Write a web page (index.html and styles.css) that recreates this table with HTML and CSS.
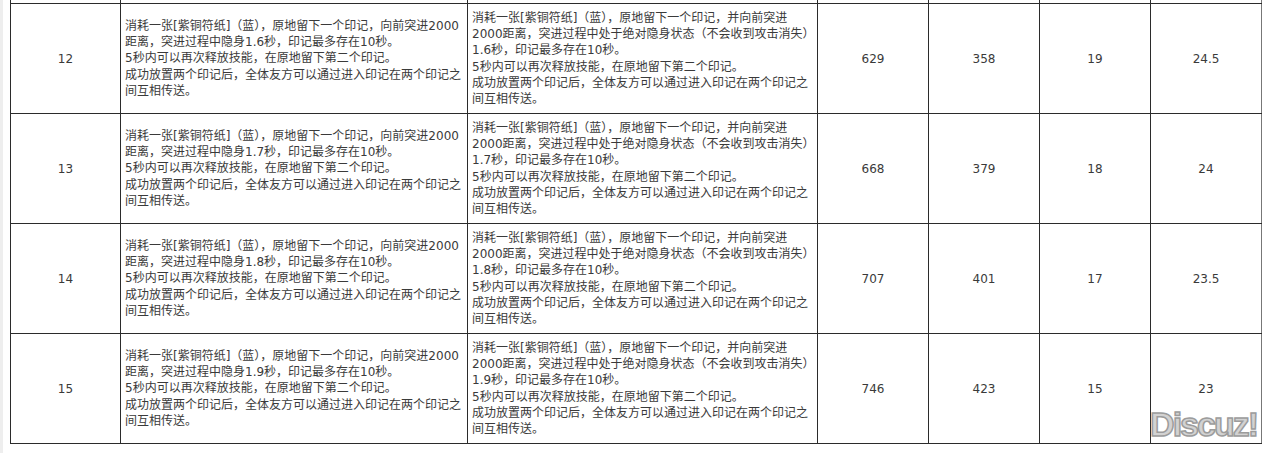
FILE: index.html
```html
<!DOCTYPE html>
<html lang="zh-CN">
<head>
<meta charset="utf-8">
<title>印记技能表</title>
<link rel="stylesheet" href="styles.css">
</head>
<body>
<div class="page">
  <div class="post">
    <table class="grid">
      <colgroup>
        <col class="c-lv"><col class="c-d1"><col class="c-d2"><col class="c-n"><col class="c-n"><col class="c-n"><col class="c-n">
      </colgroup>
      <tbody>
        <tr class="stub"><td></td><td></td><td></td><td></td><td></td><td></td><td class="last"></td></tr>
        <tr class="row">
          <td class="num">12</td>
          <td class="desc">消耗一张[紫铜符纸]（蓝），原地留下一个印记，向前突进2000<br>距离，突进过程中隐身1.6秒，印记最多存在10秒。<br>5秒内可以再次释放技能，在原地留下第二个印记。<br>成功放置两个印记后，全体友方可以通过进入印记在两个印记之<br>间互相传送。</td>
          <td class="desc">消耗一张[紫铜符纸]（蓝），原地留下一个印记，并向前突进<br>2000距离，突进过程中处于绝对隐身状态（不会收到攻击消失）<br>1.6秒，印记最多存在10秒。<br>5秒内可以再次释放技能，在原地留下第二个印记。<br>成功放置两个印记后，全体友方可以通过进入印记在两个印记之<br>间互相传送。</td>
          <td class="num">629</td>
          <td class="num">358</td>
          <td class="num">19</td>
          <td class="num last">24.5</td>
        </tr>
        <tr class="row">
          <td class="num">13</td>
          <td class="desc">消耗一张[紫铜符纸]（蓝），原地留下一个印记，向前突进2000<br>距离，突进过程中隐身1.7秒，印记最多存在10秒。<br>5秒内可以再次释放技能，在原地留下第二个印记。<br>成功放置两个印记后，全体友方可以通过进入印记在两个印记之<br>间互相传送。</td>
          <td class="desc">消耗一张[紫铜符纸]（蓝），原地留下一个印记，并向前突进<br>2000距离，突进过程中处于绝对隐身状态（不会收到攻击消失）<br>1.7秒，印记最多存在10秒。<br>5秒内可以再次释放技能，在原地留下第二个印记。<br>成功放置两个印记后，全体友方可以通过进入印记在两个印记之<br>间互相传送。</td>
          <td class="num">668</td>
          <td class="num">379</td>
          <td class="num">18</td>
          <td class="num last">24</td>
        </tr>
        <tr class="row">
          <td class="num">14</td>
          <td class="desc">消耗一张[紫铜符纸]（蓝），原地留下一个印记，向前突进2000<br>距离，突进过程中隐身1.8秒，印记最多存在10秒。<br>5秒内可以再次释放技能，在原地留下第二个印记。<br>成功放置两个印记后，全体友方可以通过进入印记在两个印记之<br>间互相传送。</td>
          <td class="desc">消耗一张[紫铜符纸]（蓝），原地留下一个印记，并向前突进<br>2000距离，突进过程中处于绝对隐身状态（不会收到攻击消失）<br>1.8秒，印记最多存在10秒。<br>5秒内可以再次释放技能，在原地留下第二个印记。<br>成功放置两个印记后，全体友方可以通过进入印记在两个印记之<br>间互相传送。</td>
          <td class="num">707</td>
          <td class="num">401</td>
          <td class="num">17</td>
          <td class="num last">23.5</td>
        </tr>
        <tr class="row">
          <td class="num">15</td>
          <td class="desc">消耗一张[紫铜符纸]（蓝），原地留下一个印记，向前突进2000<br>距离，突进过程中隐身1.9秒，印记最多存在10秒。<br>5秒内可以再次释放技能，在原地留下第二个印记。<br>成功放置两个印记后，全体友方可以通过进入印记在两个印记之<br>间互相传送。</td>
          <td class="desc">消耗一张[紫铜符纸]（蓝），原地留下一个印记，并向前突进<br>2000距离，突进过程中处于绝对隐身状态（不会收到攻击消失）<br>1.9秒，印记最多存在10秒。<br>5秒内可以再次释放技能，在原地留下第二个印记。<br>成功放置两个印记后，全体友方可以通过进入印记在两个印记之<br>间互相传送。</td>
          <td class="num">746</td>
          <td class="num">423</td>
          <td class="num">15</td>
          <td class="num last">23</td>
        </tr>
      </tbody>
    </table>
    <div class="watermark">Discuz!</div>
  </div>
</div>
</body>
</html>
```

FILE: styles.css
```css
html, body {
  margin: 0;
  padding: 0;
  background: #ffffff;
}

.page {
  width: 1272px;
  height: 453px;
  box-sizing: border-box;
  border-left: 3px solid #eeeeee;
  padding-left: 7px;
  overflow: hidden;
}

.post {
  position: relative;
  width: 1252px;
}

.grid {
  border-collapse: collapse;
  table-layout: fixed;
  width: 1252px;
  font-family: "DejaVu Sans", "Noto Sans CJK SC", sans-serif;
  font-size: 12px;
  color: #3a3a3a;
}

.c-lv { width: 110px; }
.c-d1 { width: 347px; }
.c-d2 { width: 350px; }
.c-n { width: 111px; }

.grid td {
  border: 1px solid #2b2b2b;
  padding: 0 4px;
  vertical-align: middle;
}

.grid td.last {
  border-left-color: #9a9a9a;
  border-right-color: #777777;
}

.stub td {
  height: 3px;
  padding: 0;
  border-top: none;
}

.row td {
  height: 110px;
  box-sizing: border-box;
  padding: 0 4px;
}

.num {
  text-align: center;
}

.desc {
  text-align: left;
  line-height: 16.2px;
  white-space: nowrap;
}

.watermark {
  position: absolute;
  right: 5px;
  bottom: 3px;
  font-family: "Liberation Sans", sans-serif;
  font-weight: bold;
  font-size: 34px;
  letter-spacing: -2px;
  color: #d2d2d2;
  -webkit-text-stroke: 1.5px #9c9c9c;
  line-height: 1;
}
```
